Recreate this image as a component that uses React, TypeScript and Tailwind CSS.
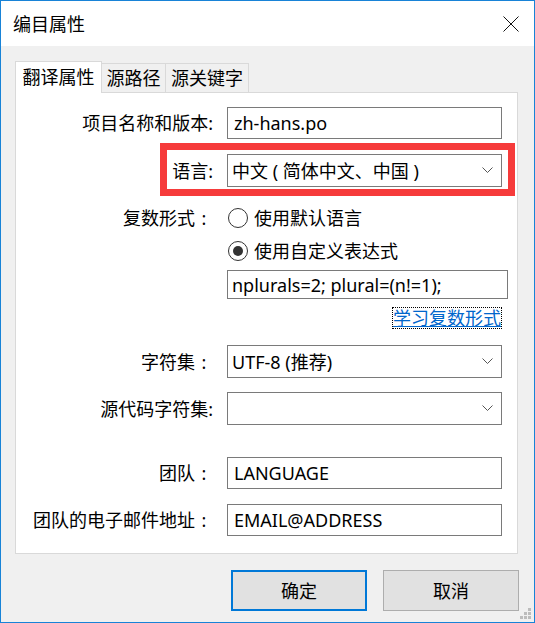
import React from "react";

const font = {
  fontFamily: '"Noto Sans", "Noto Sans CJK SC", sans-serif',
};

function Chevron() {
  return (
    <svg width="11" height="7" viewBox="0 0 11 7" className="shrink-0">
      <path d="M0.5 0.5 L5.5 5.5 L10.5 0.5" fill="none" stroke="#555" strokeWidth="1" />
    </svg>
  );
}

// full: full-width colon (centered in an 18px cell, like YaHei's "：")
function Label({ text, full }: { text?: string; full?: boolean }) {
  return (
    <div className="flex w-[197px] shrink-0 justify-end">
      {text && (
        <>
          <span>{text}</span>
          {full ? (
            <span className="inline-block w-[18px] text-center">:</span>
          ) : (
            <span>:</span>
          )}
        </>
      )}
    </div>
  );
}

function TextBox({ value }: { value: string }) {
  return (
    <div className="flex h-[32px] w-[275px] items-center border border-[#7a7a7a] bg-white pl-[6px]">
      {value}
    </div>
  );
}

function Select({ value }: { value: string }) {
  return (
    <div className="flex h-[33px] w-[275px] items-center justify-between border border-[#7a7a7a] bg-white pl-[4px] pr-[8px]">
      <span className="whitespace-pre">{value}</span>
      <Chevron />
    </div>
  );
}

function Radio({ checked, label }: { checked?: boolean; label: string }) {
  return (
    <div className="flex items-center gap-[6px] pl-[1px]">
      <div className="flex h-[20px] w-[20px] items-center justify-center rounded-full border border-[#333] bg-white">
        {checked && <div className="h-[10px] w-[10px] rounded-full bg-[#333]" />}
      </div>
      <span>{label}</span>
    </div>
  );
}

export default function App() {
  return (
    <div
      style={font}
      className="relative flex h-[623px] w-[535px] flex-col border border-[#1883d7] bg-[#f0f0f0] text-[18px] leading-[24px] text-black"
    >
      {/* title bar */}
      <div className="flex h-[45px] shrink-0 items-center justify-between bg-white pl-[12px] pr-[15px]">
        <span>编目属性</span>
        <svg width="16" height="16" viewBox="0 0 16 16">
          <path d="M0.5 0.5 L15.5 15.5 M15.5 0.5 L0.5 15.5" stroke="#111" strokeWidth="1" />
        </svg>
      </div>

      {/* tabs */}
      <div className="flex items-end pl-[14px] pt-[15px]">
        <div className="relative z-10 -mb-px flex h-[32px] w-[87px] items-center justify-center border border-b-0 border-[#d9d9d9] bg-white pb-[1px]">
          翻译属性
        </div>
        <div className="flex h-[29px] w-[64px] items-center justify-center border border-l-0 border-b-0 border-[#d9d9d9]">
          源路径
        </div>
        <div className="flex h-[29px] w-[83px] items-center justify-center border border-l-0 border-b-0 border-[#d9d9d9]">
          源关键字
        </div>
      </div>

      {/* panel */}
      <div className="ml-[14px] flex w-[503px] flex-col border border-[#d9d9d9] bg-white pb-[17px] pt-[14px]">
        <div className="flex items-center gap-[14px]">
          <Label text="项目名称和版本" />
          <TextBox value="zh-hans.po" />
        </div>
        <div className="mt-[15px] flex items-center gap-[14px]">
          <Label text="语言" />
          <Select value="中文 ( 简体中文、中国 )" />
        </div>
        <div className="mt-[19px] flex h-[24px] items-center gap-[14px]">
          <Label text="复数形式" full />
          <Radio label="使用默认语言" />
        </div>
        <div className="mt-[9px] flex h-[24px] items-center gap-[14px]">
          <Label />
          <Radio checked label="使用自定义表达式" />
        </div>
        <div className="mt-[7px] flex items-center gap-[14px]">
          <Label />
          <div className="flex h-[29px] w-[281px] items-center border border-[#7a7a7a] bg-white pl-[4px]">
            nplurals=2; plural=(n!=1);
          </div>
        </div>
        <div className="mt-[8px] flex h-[22px] items-center gap-[14px]">
          <Label />
          <div className="flex w-[275px] justify-end">
            <span className="border border-dotted border-black leading-[20px] text-[#0066cc] underline">
              学习复数形式
            </span>
          </div>
        </div>
        <div className="mt-[16px] flex items-center gap-[14px]">
          <Label text="字符集" full />
          <Select value="UTF-8 (推荐)" />
        </div>
        <div className="mt-[14px] flex items-center gap-[14px]">
          <Label text="源代码字符集" />
          <Select value="" />
        </div>
        <div className="mt-[32px] flex items-center gap-[14px]">
          <Label text="团队" full />
          <TextBox value="LANGUAGE" />
        </div>
        <div className="mt-[15px] flex items-center gap-[14px]">
          <Label text="团队的电子邮件地址" full />
          <TextBox value="EMAIL@ADDRESS" />
        </div>
      </div>

      {/* buttons */}
      <div className="mt-[16px] flex justify-end gap-[16px] pr-[15px]">
        <button className="flex h-[41px] w-[136px] items-center justify-center border-2 border-[#0078d7] bg-[#e1e1e1]">
          确定
        </button>
        <button className="flex h-[41px] w-[136px] items-center justify-center border border-[#adadad] bg-[#e1e1e1]">
          取消
        </button>
      </div>

      {/* size grip */}
      <svg width="12" height="12" viewBox="0 0 12 12" className="absolute bottom-[2px] right-[2px]">
        <rect x="8" y="0" width="3" height="3" fill="#bcbcbc" />
        <rect x="4" y="4" width="3" height="3" fill="#bcbcbc" />
        <rect x="8" y="4" width="3" height="3" fill="#bcbcbc" />
        <rect x="0" y="8" width="3" height="3" fill="#bcbcbc" />
        <rect x="4" y="8" width="3" height="3" fill="#bcbcbc" />
        <rect x="8" y="8" width="3" height="3" fill="#bcbcbc" />
      </svg>

      {/* annotation box */}
      <div className="pointer-events-none absolute left-[159px] top-[142px] h-[53px] w-[355px] border-[7px] border-[#f63b3b]" />
    </div>
  );
}
